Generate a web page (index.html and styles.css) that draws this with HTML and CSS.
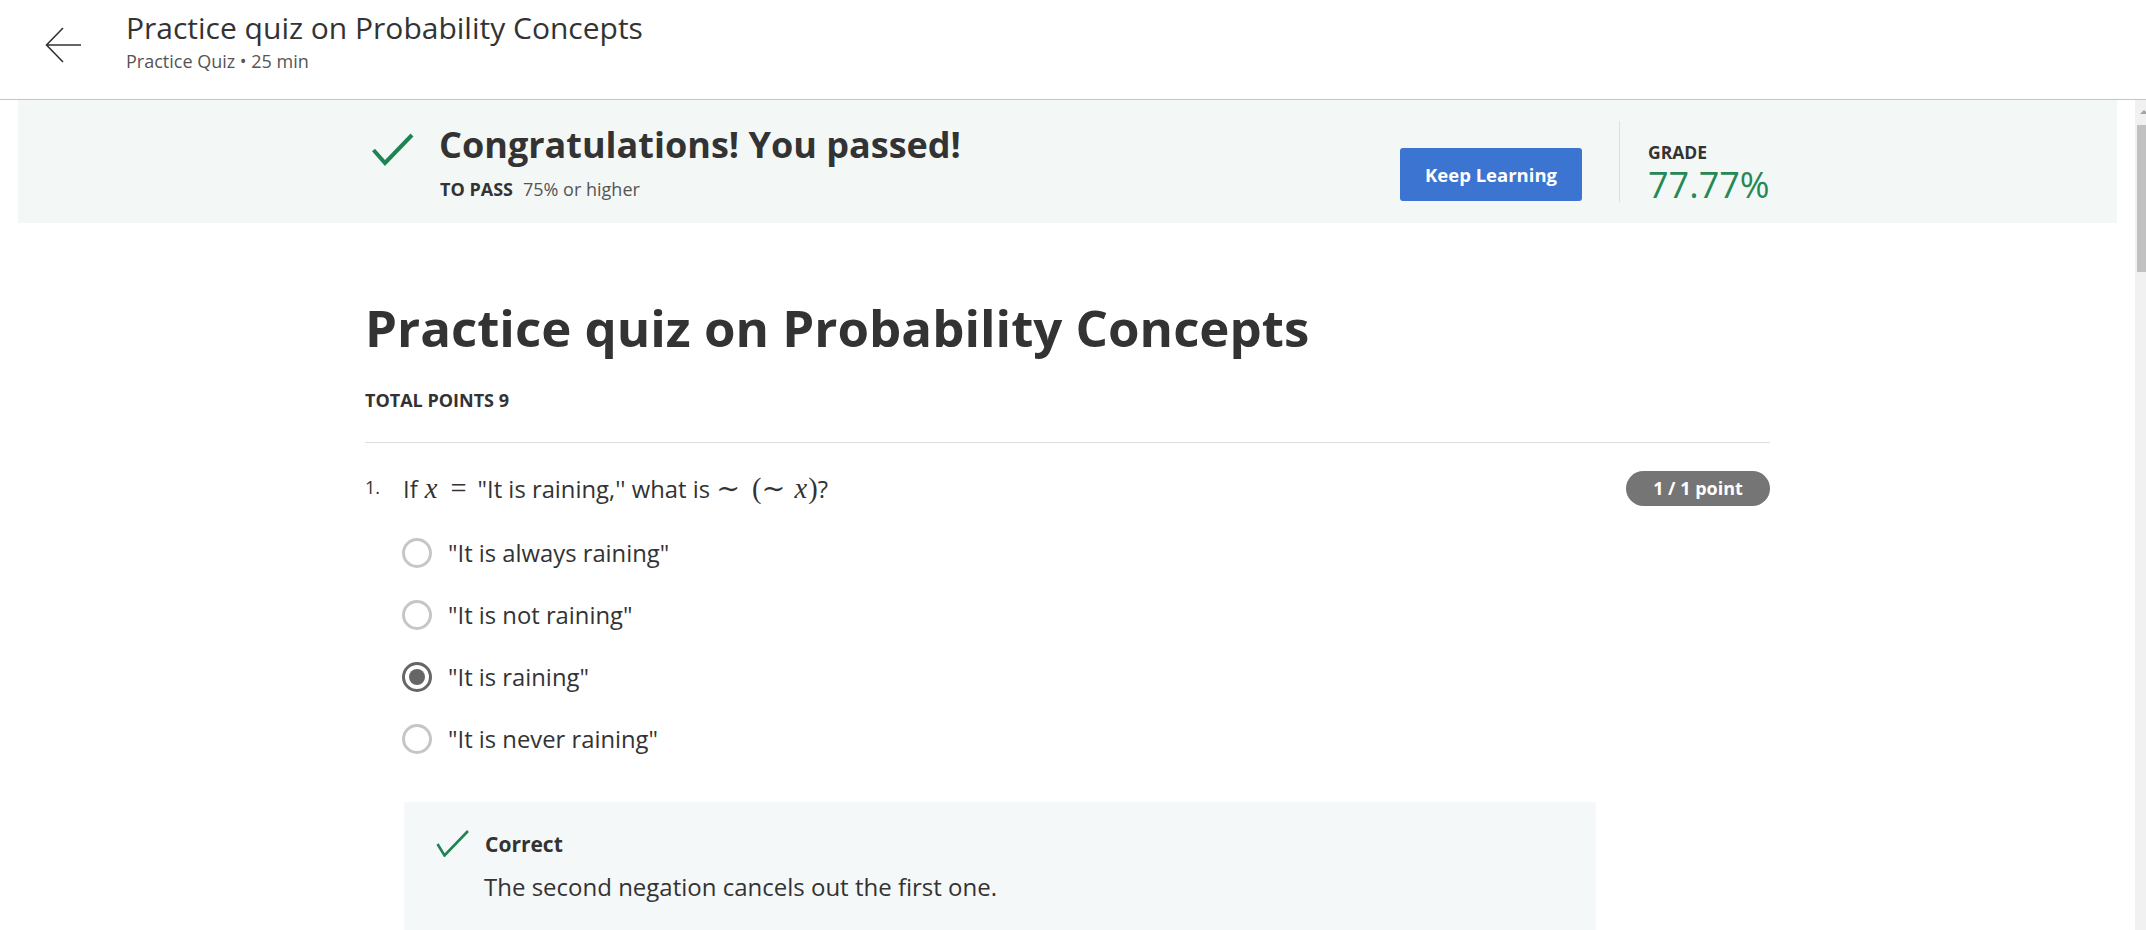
FILE: index.html
```html
<!DOCTYPE html>
<html lang="en">
<head>
<meta charset="utf-8">
<title>Practice quiz on Probability Concepts</title>
<link rel="stylesheet" href="styles.css">
</head>
<body>
<header class="topbar">
  <svg class="back" width="37" height="36" viewBox="0 0 37 36" aria-hidden="true">
    <path d="M36 18 H1.5 M18 1 L1.5 18 L18 35" fill="none" stroke="#333" stroke-width="1.6"/>
  </svg>
  <div class="topbar-text">
    <div class="topbar-title">Practice quiz on Probability Concepts</div>
    <div class="topbar-sub">Practice Quiz • 25 min</div>
  </div>
</header>
<div class="main">
  <div class="content">
    <section class="banner">
      <div class="banner-inner">
        <svg class="pass-check" width="42" height="34" viewBox="0 0 42 34" aria-hidden="true">
          <path d="M1.5 17 L13 30 L40 2" fill="none" stroke="#1f8354" stroke-width="4"/>
        </svg>
        <div class="pass-text">
          <div class="pass-title">Congratulations! You passed!</div>
          <div class="pass-req"><b>TO PASS</b><span>75% or higher</span></div>
        </div>
        <div class="banner-right">
          <button class="keep">Keep Learning</button>
          <div class="vdiv"></div>
          <div class="grade">
            <div class="grade-label">GRADE</div>
            <div class="grade-value">77.77%</div>
          </div>
        </div>
      </div>
    </section>
    <section class="quiz">
      <h1 class="quiz-title">Practice quiz on Probability Concepts</h1>
      <div class="total">TOTAL POINTS 9</div>
      <hr class="rule">
      <div class="question">
        <span class="qnum">1.</span>
        <span class="qtext">If <span class="m mi">x</span><span class="m mo">=</span>"It is raining,'' what is <span class="m rel1">∼</span><span class="m">(</span><span class="m rel2">∼</span><span class="m mi">x</span><span class="m">)</span>?</span>
        <span class="badge">1 / 1 point</span>
      </div>
      <ul class="options">
        <li class="opt"><span class="radio"></span><span>"It is always raining"</span></li>
        <li class="opt"><span class="radio"></span><span>"It is not raining"</span></li>
        <li class="opt"><span class="radio on"></span><span>"It is raining"</span></li>
        <li class="opt"><span class="radio"></span><span>"It is never raining"</span></li>
      </ul>
      <div class="feedback">
        <div class="fb-head">
          <svg class="fb-check" width="33" height="27" viewBox="0 0 33 27" aria-hidden="true">
            <path d="M1.5 14 L8.5 25.5 L32 1" fill="none" stroke="#1f8354" stroke-width="2.6"/>
          </svg>
          <span class="fb-title">Correct</span>
        </div>
        <p class="fb-body">The second negation cancels out the first one.</p>
      </div>
    </section>
  </div>
  <div class="scrollbar">
    <div class="sb-arrow"></div>
    <div class="sb-thumb"></div>
  </div>
</div>
</body>
</html>
```
FILE: styles.css
```css
html, body {
  margin: 0;
  padding: 0;
  height: 100%;
  overflow: hidden;
  background: #fff;
}
body {
  font-family: "Open Sans", "Liberation Sans", sans-serif;
  color: #333;
}

.topbar {
  height: 100px;
  box-sizing: border-box;
  border-bottom: 1px solid #c4c4c4;
  display: flex;
  align-items: flex-start;
  padding: 10px 0 0 45px;
}
.back {
  margin-top: 17px;
  margin-right: 44px;
  flex: none;
}
.topbar-title {
  font-size: 30px;
  line-height: 36px;
  color: #333;
}
.topbar-sub {
  margin-top: 3px;
  font-size: 18px;
  line-height: 24px;
  color: #555;
}

.main {
  display: flex;
  height: 830px;
}
.content {
  flex: 1;
  overflow: hidden;
}
.scrollbar {
  width: 11px;
  background: #f1f1f1;
  display: flex;
  flex-direction: column;
}
.sb-arrow {
  height: 25px;
  position: relative;
}
.sb-arrow::after {
  content: "";
  position: absolute;
  left: 5px;
  top: 10px;
  border-left: 4px solid transparent;
  border-right: 4px solid transparent;
  border-bottom: 4px solid #a3a3a3;
}
.sb-thumb {
  height: 147px;
  margin-left: 2px;
  background: #c1c1c1;
}

.banner {
  margin: 0 18px;
  height: 123px;
  background: #f3f8f7;
}
.banner-inner {
  width: 1405px;
  height: 100%;
  margin: 0 auto;
  display: flex;
  align-items: center;
}
.pass-check {
  flex: none;
  margin-left: 7px;
  align-self: flex-start;
  margin-top: 33px;
}
.pass-text {
  margin-left: 25px;
}
.pass-title {
  font-size: 36px;
  line-height: 44px;
  font-weight: 700;
  color: #333;
}
.pass-req {
  margin-top: 10px;
  font-size: 18px;
  line-height: 24px;
  color: #555;
}
.pass-req b {
  color: #333;
  margin-right: 10px;
  margin-left: 1px;
}
.banner-right {
  margin-left: auto;
  height: 81px;
  display: flex;
  align-items: flex-end;
}
.keep {
  width: 182px;
  height: 53px;
  margin-bottom: 1px;
  border: none;
  border-radius: 3px;
  background: #3b74d1;
  color: #fff;
  font-family: "Open Sans", "Liberation Sans", sans-serif;
  font-size: 18.5px;
  font-weight: 700;
  padding: 0;
}
.vdiv {
  width: 1px;
  height: 81px;
  background: #dcdfde;
  margin: 0 28px 0 37px;
}
.grade {
  width: 122px;
  margin-bottom: -4px;
}
.grade-label {
  font-size: 17.5px;
  line-height: 22px;
  font-weight: 700;
  color: #333;
}
.grade-value {
  font-size: 36px;
  line-height: 43px;
  color: #258856;
}

.quiz {
  width: 1405px;
  margin: 0 auto;
}
.quiz-title {
  margin: 74px 0 0;
  font-size: 51px;
  line-height: 60px;
  font-weight: 700;
  color: #333;
}
.total {
  margin-top: 31px;
  font-size: 18px;
  line-height: 24px;
  font-weight: 700;
  color: #333;
}
.rule {
  margin: 30px 0 0;
  border: none;
  border-top: 1px solid #dedede;
  height: 0;
}
.question {
  margin-top: 28px;
  height: 35px;
  display: flex;
  align-items: flex-start;
}
.qnum {
  width: 38px;
  flex: none;
  font-size: 18px;
  line-height: 32px;
  color: #333;
}
.qtext {
  font-size: 23.8px;
  line-height: 35px;
  color: #333;
  white-space: nowrap;
}
.m {
  font-family: "Liberation Serif", "DejaVu Serif", serif;
  font-size: 28.5px;
}
.mi {
  font-style: italic;
  margin: 0 1px;
}
.mo {
  margin: 0 11px 0 12px;
}
.rel1 {
  margin: 0 12px 0 0;
}
.rel2 {
  margin: 0 8px 0 0;
}
.badge {
  margin-left: auto;
  width: 144px;
  height: 35px;
  border-radius: 18px;
  background: #757575;
  color: #fff;
  font-size: 18px;
  font-weight: 700;
  line-height: 35px;
  text-align: center;
}

.options {
  list-style: none;
  margin: 31.5px 0 0;
  padding: 0 0 0 37px;
  display: flex;
  flex-direction: column;
  gap: 32px;
}
.opt {
  display: flex;
  align-items: center;
  height: 30px;
  font-size: 23.8px;
  color: #333;
}
.radio {
  width: 30px;
  height: 30px;
  box-sizing: border-box;
  border: 3px solid #c6c6c6;
  border-radius: 50%;
  margin-right: 16px;
  flex: none;
  display: flex;
  align-items: center;
  justify-content: center;
}
.radio.on {
  border-color: #666;
}
.radio.on::after {
  content: "";
  width: 16px;
  height: 16px;
  border-radius: 50%;
  background: #666;
}

.feedback {
  margin: 48px 0 0 39px;
  width: 1192px;
  box-sizing: border-box;
  background: #f5f8f8;
  padding: 27px 0 40px 32px;
}
.fb-head {
  display: flex;
  align-items: flex-start;
}
.fb-check {
  flex: none;
  margin-top: 1px;
  margin-right: 16px;
}
.fb-title {
  font-size: 21px;
  line-height: 30px;
  font-weight: 700;
  color: #333;
}
.fb-body {
  margin: 12px 0 0 48px;
  font-size: 24px;
  line-height: 32px;
  color: #333;
}
```
